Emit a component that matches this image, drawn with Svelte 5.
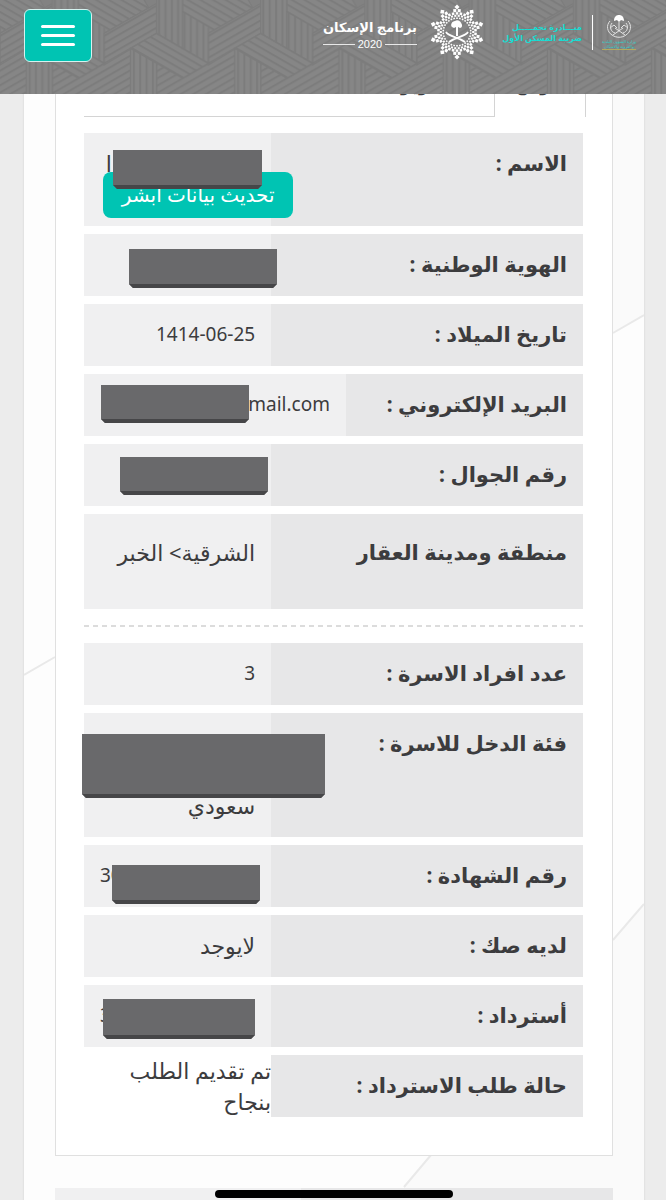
<script lang="ts">
  interface Cover {
    left: number;
    top: number;
    width: number;
    height: number;
  }

  interface Row {
    label: string;
    value?: string;
    /** Part of the value that stays visible at the far end of the cell */
    tail?: string;
    link?: string;
    lines?: number;
    latin?: boolean;
    wide?: boolean;
    tall?: boolean;
    bare?: boolean;
    cover?: Cover;
  }

  const applicant: Row[] = [
    {
      label: "الاسم :",
      tail: "ا\u00a0",
      link: "تحديث بيانات أبشر",
      lines: 2,
      cover: { left: 29, top: 17, width: 149, height: 39 },
    },
    { label: "الهوية الوطنية :", cover: { left: 45, top: 15, width: 148, height: 39 } },
    { label: "تاريخ الميلاد :", value: "1414-06-25", latin: true },
    {
      label: "البريد الإلكتروني :",
      value: "mail.com",
      tail: ".",
      latin: true,
      wide: true,
      cover: { left: 17, top: 11, width: 148, height: 38 },
    },
    { label: "رقم الجوال :", cover: { left: 36, top: 13, width: 148, height: 38 } },
    { label: "منطقة ومدينة العقار", value: "الشرقية> الخبر", tall: true },
  ];

  const request: Row[] = [
    { label: "عدد افراد الاسرة :", value: "3", latin: true },
    {
      label: "فئة الدخل للاسرة :",
      value: "\n\nسعودي",
      lines: 3,
      cover: { left: -2, top: 21, width: 243, height: 64 },
    },
    {
      label: "رقم الشهادة :",
      tail: "30",
      latin: true,
      cover: { left: 28, top: 20, width: 148, height: 39 },
    },
    { label: "لديه صك :", value: "لايوجد" },
    {
      label: "أسترداد :",
      tail: "3",
      latin: true,
      cover: { left: 19, top: 14, width: 152, height: 40 },
    },
    { label: "حالة طلب الاسترداد :", value: "تم تقديم الطلب\nبنجاح", bare: true },
  ];

  // Rings of the star logo: radius, square size, angles inside each 36° sector
  const rings: [number, number, number[]][] = [
    [25, 3.6, [0]],
    [21.5, 3, [-6, 6]],
    [18.6, 2.5, [-12, 0, 12]],
    [16.2, 2, [-6, 6, 18]],
    [13.8, 1.6, [-12, 0, 12]],
  ];

  const dots = rings.flatMap(([r, size, angles]) =>
    Array.from({ length: 10 }, (_, i) => angles.map((a) => ({ r, size, angle: i * 36 + a }))).flat()
  );

  let menuOpen = $state(false);
</script>

{#snippet rows(items: Row[])}
  <dl>
    {#each items as row}
      <div class="row" class:tall={row.tall} class:wide={row.wide} class:bare={row.bare}>
        <dt>{row.label}</dt>
        <dd class:latin={row.latin}>
          <span class="value" style:min-height="{(row.lines ?? 1) * 31}px">{row.value ?? ""}</span>
          {#if row.tail}<span>{row.tail}</span>{/if}
          {#if row.link}<a class="update" href="#absher">{row.link}</a>{/if}
          {#if row.cover}
            <span
              class="cover"
              style:left="{row.cover.left}px"
              style:top="{row.cover.top}px"
              style:width="{row.cover.width}px"
              style:height="{row.cover.height}px"
            ></span>
          {/if}
        </dd>
      </div>
    {/each}
  </dl>
{/snippet}

<div class="app" dir="rtl">
  <header>
    <svg class="weave" width="100%" height="100%" aria-hidden="true">
      <defs>
        <pattern id="up" width="19" height="19" patternUnits="userSpaceOnUse" patternTransform="rotate(-30)">
          <rect width="19" height="19" fill="#868686" />
          <rect width="19" height="6" fill="#7c7c7c" />
        </pattern>
        <pattern id="down" width="19" height="19" patternUnits="userSpaceOnUse" patternTransform="rotate(30)">
          <rect width="19" height="19" fill="#868686" />
          <rect width="19" height="6" fill="#7c7c7c" />
        </pattern>
        <pattern id="plumb" width="19" height="19" patternUnits="userSpaceOnUse">
          <rect width="19" height="19" fill="#868686" />
          <rect width="6" height="19" fill="#7c7c7c" />
        </pattern>
        <pattern id="weave" width="313" height="285" patternUnits="userSpaceOnUse" patternTransform="scale(0.333)">
          <g stroke="#7c7c7c" stroke-width="4">
            {#each [-313, 0, 313] as x}
              <g transform="translate({x - 313} 0)">
                <path d="M470 190L626 100V195L783 100V290H470Z" fill="url(#up)" />
                <path d="M313 190V100L470 10V100Z" fill="url(#up)" />
                <path d="M548 -10H740L760 24L626 100L548 55Z" fill="url(#down)" />
                <path d="M470 -10H548V145L470 100Z" fill="url(#plumb)" />
                <path d="M548 35L626 80V190L548 145Z" fill="url(#plumb)" />
                <path d="M392 145L470 100L626 190L548 235Z" fill="url(#down)" />
                <path d="M392 145L470 190V290H392Z" fill="url(#plumb)" />
              </g>
            {/each}
          </g>
        </pattern>
      </defs>
      <rect width="100%" height="100%" fill="url(#weave)" />
    </svg>

    <div class="brands">
      <div class="ministry">
        <svg width="28" height="24" viewBox="0 0 28 24" fill="none" stroke="#e3e3e3" aria-hidden="true">
          <path d="M5 6C1 10 2 17 7 20C11 23 17 23 21 20C26 17 27 10 23 6" stroke-width="1" />
          <path d="M7 8C4 12 6 17 10 18M21 8C24 12 22 17 18 18M14 7V15" stroke-width="1" />
          <path d="M5 13L9 10L12 13M23 13L19 10L16 13M8 20L18 13M20 20L10 13" stroke-width="1" />
          <path d="M9 6C9 1 12 0 14 0C17 0 19 2 19 6L16 5L14 7L12 5Z" fill="#fff" stroke="none" />
        </svg>
        <small>وزارة الشؤون البلدية<br />والقروية والإسكان</small>
      </div>
      <p class="initiative">مبـــادرة تحمـــــل<br />ضريبة المسكن الأول</p>
      <svg class="star" width="56" height="56" viewBox="-28 -28 56 56" fill="#fff" aria-hidden="true">
        {#each dots as dot}
          <rect
            x={-dot.size / 2}
            y={-dot.r - dot.size / 2}
            width={dot.size}
            height={dot.size}
            transform="rotate({dot.angle}) rotate({dot.r > 24 ? 45 : 0} 0 {-dot.r})"
          />
        {/each}
        <path d="M-5 -5C-7 -7 -5 -11 -2 -11C0 -13 4 -11 4 -9C6 -7 5 -4 3 -4L1 -5L1 4H-1L-1 -5L-3 -4Z" />
        <path d="M-11 0C-8 5 0 4 8 10M11 0C8 5 0 4 -8 10" fill="none" stroke="#fff" stroke-width="1.8" />
      </svg>
      <div class="program">
        <strong>برنامج الإسكان</strong>
        <span class="year">2020</span>
      </div>
    </div>

    <button
      class="menu"
      type="button"
      aria-label="القائمة"
      aria-expanded={menuOpen}
      onclick={() => (menuOpen = !menuOpen)}
    >
      <span></span>
      <span></span>
      <span></span>
    </button>
  </header>

  <main>
    <div class="sheet">
      <svg class="facets" viewBox="0 0 620 1200" preserveAspectRatio="none" aria-hidden="true">
        <path d="M620 0V315L589 333L300 333V0Z M380 1187L407 1155L620 904V1200H380Z" fill="#fafafa" />
        <path d="M0 675L31 657M589 333L620 315M380 1187L407 1155M589 940L620 904" stroke="#e9e9e9" stroke-width="2" />
      </svg>

      <section class="card">
        <nav>
          <a class="tab active" href="#view">عرض</a>
          <a class="tab" href="#edit">تحرير</a>
        </nav>
        {@render rows(applicant)}
        <hr />
        {@render rows(request)}
      </section>

      <div class="next"><div></div></div>
    </div>
  </main>

  <div class="home"></div>
</div>

<style>
  :global(body) {
    background: #ececec;
  }

  .app {
    font-family: "Noto Sans", "DejaVu Sans", sans-serif;
    font-size: 22px;
    line-height: 31px;
    color: #3c3c3e;
  }

  header {
    position: fixed;
    inset: 0 0 auto;
    z-index: 2;
    box-sizing: border-box;
    height: 94px;
    padding: 4px 30px 0 24px;
    display: flex;
    justify-content: space-between;
    align-items: flex-start;
    background: #828282;
    color: #fff;
  }

  .weave {
    position: absolute;
    inset: 0;
    z-index: -1;
  }

  .brands {
    display: flex;
    align-items: center;
  }

  .ministry {
    display: flex;
    flex-direction: column;
    align-items: center;
    width: 34px;
    padding-left: 9px;
    border-left: 1px solid #fff;
  }

  .ministry small {
    font-size: 4px;
    line-height: 5px;
    text-align: center;
    white-space: nowrap;
    color: #2fd0c8;
    border-bottom: 1px solid #b5a95c;
  }

  .initiative {
    margin: 0 10px 0 0;
    width: 74px;
    font-size: 8px;
    font-weight: 700;
    line-height: 11px;
    color: #19dcd2;
    white-space: nowrap;
  }

  .star {
    margin-right: 23px;
  }

  .program {
    width: 94px;
    margin-right: 12px;
    padding-top: 4px;
    font-size: 13px;
    line-height: 20px;
    white-space: nowrap;
  }

  .program strong {
    display: block;
  }

  .year {
    display: flex;
    align-items: center;
    gap: 3px;
    font: 11px/14px "Liberation Sans", sans-serif;
  }

  .year::before,
  .year::after {
    content: "";
    flex: 1;
    height: 1px;
    background: #e8e8e8;
  }

  .menu {
    display: flex;
    flex-direction: column;
    align-items: center;
    justify-content: center;
    gap: 6px;
    box-sizing: border-box;
    width: 68px;
    height: 53px;
    margin-top: 5px;
    padding: 0;
    background: #00c4b3;
    border: 1px solid #d5f3f0;
    border-radius: 6px;
    cursor: pointer;
  }

  .menu span {
    width: 34px;
    height: 3px;
    border-radius: 2px;
    background: #fff;
  }

  main {
    height: 100vh;
    overflow-y: auto;
    scrollbar-width: none;
  }

  .sheet {
    position: relative;
    min-height: 100%;
    box-sizing: border-box;
    margin: 0 22px 0 24px;
    padding: 64px 31px 0;
    background: #fdfdfd;
    box-shadow: 0 0 2px #cfcfcf;
  }

  .facets {
    position: absolute;
    top: 0;
    left: 0;
    width: 100%;
    height: 1200px;
  }

  .card {
    position: relative;
    padding: 0 29px 38px 28px;
    background: #fff;
    border: 1px solid #e0e0e0;
    border-top: 0;
  }

  nav {
    display: flex;
    margin-bottom: 16px;
  }

  .tab {
    box-sizing: border-box;
    width: 92px;
    height: 53px;
    padding: 5px 0 0;
    font-size: 18px;
    font-weight: 700;
    text-align: center;
    text-decoration: none;
    color: #3c3c3e;
    border-bottom: 1px solid #d4d4d4;
  }

  .tab:not(.active) {
    flex: 1;
    padding-right: 44px;
    text-align: right;
  }

  .tab.active {
    border: 1px solid #d4d4d4;
    border-width: 0 1px;
    margin-right: -3px;
  }

  dl {
    display: flex;
    flex-direction: column;
    gap: 8px;
    margin: 0;
  }

  .row {
    display: flex;
    justify-content: space-between;
  }

  dt {
    flex: 1;
    padding: 15px 16px 16px;
    background: #e7e7e8;
    font-size: 21px;
    font-weight: 700;
  }

  dd {
    position: relative;
    box-sizing: border-box;
    display: flex;
    justify-content: space-between;
    width: 37.5%;
    margin: 0;
    padding: 15px 16px 16px;
    background: #f0f0f1;
  }

  .latin {
    font-size: 19px;
  }

  .wide dd {
    width: 52.5%;
  }

  .tall dt,
  .tall dd {
    padding: 23px 16px 41px;
  }

  .bare dd {
    padding: 0;
    background: none;
  }

  .bare .value {
    max-height: 62px;
  }

  .value {
    white-space: pre-line;
  }

  .update {
    position: absolute;
    top: 39px;
    right: -22px;
    box-sizing: border-box;
    width: 190px;
    height: 46px;
    font-size: 20px;
    line-height: 46px;
    border-radius: 8px;
    background: #00c4b3;
    color: #fff;
    text-align: center;
    text-decoration: none;
    white-space: nowrap;
  }

  .cover {
    position: absolute;
    z-index: 1;
    background: linear-gradient(#0000 calc(100% - 4px), #464648 calc(100% - 4px)), #69696b;
    clip-path: polygon(0 0, 100% 0, 100% calc(100% - 4px), calc(100% - 4px) 100%, 4px 100%, 0 calc(100% - 4px));
  }

  hr {
    height: 2px;
    margin: 16px 0;
    border: 0;
    background: repeating-linear-gradient(90deg, #dcdcdc 0 5px, #0000 5px 9px);
  }

  .next {
    position: relative;
    display: flex;
    height: 62px;
    margin-top: 32px;
    background: #f0f0f1;
  }

  .next div {
    width: 56%;
    background: #e7e7e8;
  }

  .home {
    position: fixed;
    bottom: 2px;
    left: 50%;
    z-index: 3;
    width: 238px;
    height: 8px;
    margin-left: -118px;
    border-radius: 4px;
    background: #000;
  }
</style>
